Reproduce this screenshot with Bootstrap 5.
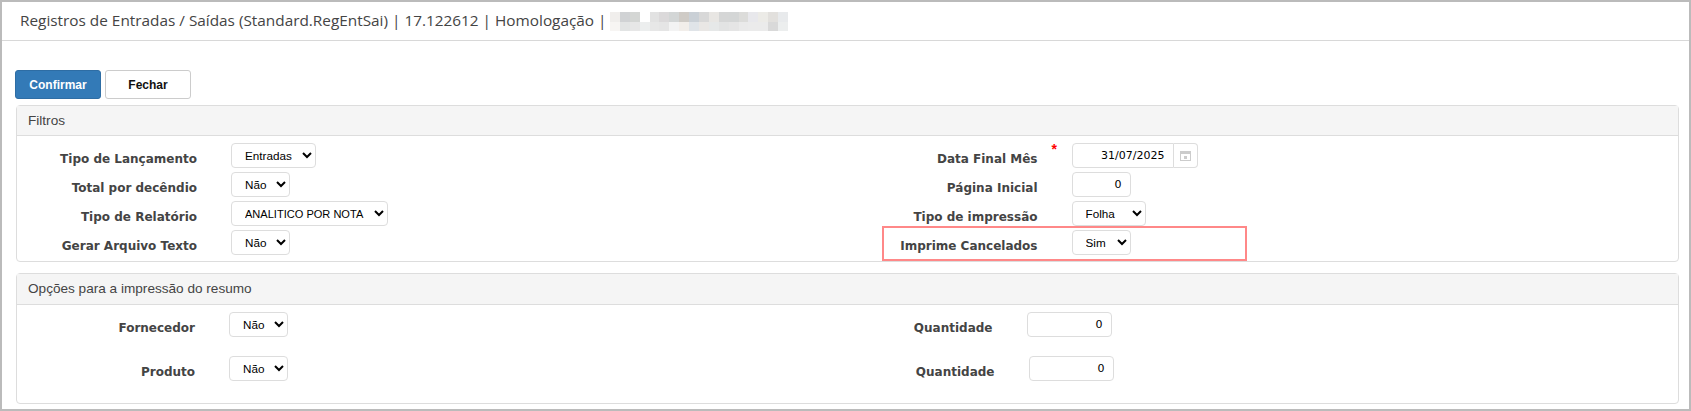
<!DOCTYPE html>
<html lang="pt-BR">
<head>
<meta charset="utf-8">
<title>Registros de Entradas / Saídas</title>
<link rel="stylesheet" href="https://cdn.jsdelivr.net/npm/bootstrap@5.3.0/dist/css/bootstrap.min.css">
<style>
html,body{height:411px;overflow:hidden;background:#fff}
.frame{height:411px;border:2px solid #bbb;font-family:"Liberation Sans",Arial,sans-serif;color:#333}
.topbar{height:39px;border-bottom:1px solid #d8d8d8;padding-left:18px;font-family:"Open Sans",sans-serif;font-size:15.35px;color:#444;gap:3px}
.smudge{width:178px;height:19px;flex:none}
.actions{padding:29px 0 0 13px;gap:4px;height:64px}
.act{height:29px;font-size:12px;font-weight:700;padding:0;border-radius:3px;font-family:"Liberation Sans",sans-serif}
.act-main{width:86px;background:#337ab7;border:1px solid #2e6da4;color:#fff}
.act-plain{width:86px;background:#fff;border:1px solid #ccc;color:#111}
.box{margin:0 10px 0 14px;border:1px solid #ddd;border-radius:4px;background:#fff}
.box-one{height:157px;margin-bottom:11px}
.box-two{height:131px}
.box-head{background:#f5f5f5;border-bottom:1px solid #ddd;height:31px;padding:0 11px;font-size:13.6px;line-height:30px;color:#444}
.box-one .box-head{height:30px}
.side{flex:0 0 50%;width:50%}
.lines-a,.lines-b{padding-top:7px}
.line{height:29px;align-items:flex-start}
.lines-b .line{height:44px}
.lbl{font-family:"DejaVu Sans",Verdana,sans-serif;font-weight:700;font-size:12px;color:#444;text-align:right;padding-top:7px;margin:0;white-space:nowrap}
.w-l1{width:180px;margin-right:34px}
.w-r1{width:190px;margin-right:34px}
.w-l2{width:178px;margin-right:34px}
.w-r2{width:145px;margin-right:34px}
.w-r3{width:147px;margin-right:34px}
.ctl{height:25px;border:1px solid #ddd;border-radius:4px;background:#fff;color:#000;font-family:"Liberation Sans",sans-serif;font-size:11.7px;padding:0 4px 0 9px;outline:0}
input.ctl{text-align:right;padding:0 8px 0 4px;font-family:"DejaVu Sans",Verdana,sans-serif;font-size:11px}
.s-85{width:85px}.s-59{width:59px}.s-157{width:157px;font-size:11.05px}.s-74{width:74px}.i-85{width:85px}
.i-date{width:102px;border-radius:4px 0 0 4px}
.cal{width:24px;height:25px;border:1px solid #ddd;border-left:0;border-radius:0 4px 4px 0;background:#fff}
.star{position:absolute;color:#f00;font-size:14px;font-weight:700;line-height:1;left:-20px;top:-1px}
.ctl-wrap{position:relative}
.mark-out{position:absolute;left:34px;top:-4px;width:365px;height:35px;border:2px solid #f88;pointer-events:none}
</style>
</head>
<body>
<div class="frame">
  <div class="topbar d-flex align-items-center">
    <span>Registros de Entradas / Saídas (Standard.RegEntSai) | 17.122612 | Homologação |</span>
    <svg class="smudge" viewBox="0 0 180 20" preserveAspectRatio="none" aria-hidden="true" shape-rendering="crispEdges"><g><rect x="0" y="0" width="10" height="10" fill="#f0eeec"/><rect x="10" y="0" width="10" height="10" fill="#d0d2d4"/><rect x="20" y="0" width="10" height="10" fill="#d4d6d4"/><rect x="30" y="0" width="10" height="10" fill="#fff"/><rect x="40" y="0" width="10" height="10" fill="#e2e2e2"/><rect x="50" y="0" width="10" height="10" fill="#dbd9da"/><rect x="60" y="0" width="10" height="10" fill="#d3d6d6"/><rect x="70" y="0" width="10" height="10" fill="#cfcbc6"/><rect x="80" y="0" width="10" height="10" fill="#cad0d6"/><rect x="90" y="0" width="10" height="10" fill="#d8d8d8"/><rect x="100" y="0" width="10" height="10" fill="#e8e6e3"/><rect x="110" y="0" width="10" height="10" fill="#d5d6d6"/><rect x="120" y="0" width="10" height="10" fill="#d4d6d6"/><rect x="130" y="0" width="10" height="10" fill="#dcdcda"/><rect x="140" y="0" width="10" height="10" fill="#e8e8ec"/><rect x="150" y="0" width="10" height="10" fill="#ecebe7"/><rect x="160" y="0" width="10" height="10" fill="#e2e0dd"/><rect x="170" y="0" width="10" height="10" fill="#e8eaec"/></g><g><rect x="0" y="10" width="10" height="10" fill="#f7f5f3"/><rect x="10" y="10" width="10" height="10" fill="#e2e4e4"/><rect x="20" y="10" width="10" height="10" fill="#e7e7e7"/><rect x="30" y="10" width="10" height="10" fill="#eceeee"/><rect x="40" y="10" width="10" height="10" fill="#e7e7e7"/><rect x="50" y="10" width="10" height="10" fill="#e5e5e5"/><rect x="60" y="10" width="10" height="10" fill="#f3f3f3"/><rect x="70" y="10" width="10" height="10" fill="#f2eeea"/><rect x="80" y="10" width="10" height="10" fill="#e0e4e8"/><rect x="90" y="10" width="10" height="10" fill="#e9e7e5"/><rect x="100" y="10" width="10" height="10" fill="#e6e8e8"/><rect x="110" y="10" width="10" height="10" fill="#e2e3e3"/><rect x="120" y="10" width="10" height="10" fill="#e5e5e5"/><rect x="130" y="10" width="10" height="10" fill="#eaeaea"/><rect x="140" y="10" width="10" height="10" fill="#ebebeb"/><rect x="150" y="10" width="10" height="10" fill="#ebebeb"/><rect x="160" y="10" width="10" height="10" fill="#d9d9d9"/><rect x="170" y="10" width="10" height="10" fill="#eceeee"/></g></svg>
  </div>
  <div class="actions d-flex">
    <button type="button" class="btn act act-main">Confirmar</button>
    <button type="button" class="btn act act-plain">Fechar</button>
  </div>
  <section class="box box-one">
    <div class="box-head">Filtros</div>
    <div class="d-flex lines-a">
      <div class="side">
        <div class="line d-flex"><label class="lbl w-l1">Tipo de Lançamento</label><select class="ctl s-85"><option>Entradas</option></select></div>
        <div class="line d-flex"><label class="lbl w-l1">Total por decêndio</label><select class="ctl s-59"><option>Não</option></select></div>
        <div class="line d-flex"><label class="lbl w-l1">Tipo de Relatório</label><select class="ctl s-157"><option>ANALITICO POR NOTA</option></select></div>
        <div class="line d-flex"><label class="lbl w-l1">Gerar Arquivo Texto</label><select class="ctl s-59"><option>Não</option></select></div>
      </div>
      <div class="side">
        <div class="line d-flex"><label class="lbl w-r1">Data Final Mês</label><div class="ctl-wrap d-flex"><span class="star">*</span><input class="ctl i-date" value="31/07/2025"><span class="cal d-flex align-items-center justify-content-center"><svg width="13" height="13" viewBox="0 0 13 13" aria-hidden="true"><rect x="1.5" y="2.5" width="10" height="9" fill="none" stroke="#ccc"/><rect x="1.5" y="2.5" width="10" height="2.5" fill="#ccc"/><rect x="5" y="7" width="3" height="3" fill="#ccc"/></svg></span></div></div>
        <div class="line d-flex"><label class="lbl w-r1">Página Inicial</label><input class="ctl s-59" value="0"></div>
        <div class="line d-flex"><label class="lbl w-r1">Tipo de impressão</label><select class="ctl s-74"><option>Folha</option></select></div>
        <div class="line d-flex position-relative"><label class="lbl w-r1">Imprime Cancelados</label><select class="ctl s-59"><option>Sim</option></select><span class="mark-out"></span></div>
      </div>
    </div>
  </section>
  <section class="box box-two">
    <div class="box-head">Opções para a impressão do resumo</div>
    <div class="d-flex lines-b">
      <div class="side">
        <div class="line d-flex"><label class="lbl w-l2">Fornecedor</label><select class="ctl s-59"><option>Não</option></select></div>
        <div class="line d-flex"><label class="lbl w-l2">Produto</label><select class="ctl s-59"><option>Não</option></select></div>
      </div>
      <div class="side">
        <div class="line d-flex"><label class="lbl w-r2">Quantidade</label><input class="ctl i-85" value="0"></div>
        <div class="line d-flex"><label class="lbl w-r3">Quantidade</label><input class="ctl i-85" value="0"></div>
      </div>
    </div>
  </section>
</div>
<script src="https://cdn.jsdelivr.net/npm/bootstrap@5.3.0/dist/js/bootstrap.bundle.min.js"></script>
</body>
</html>
